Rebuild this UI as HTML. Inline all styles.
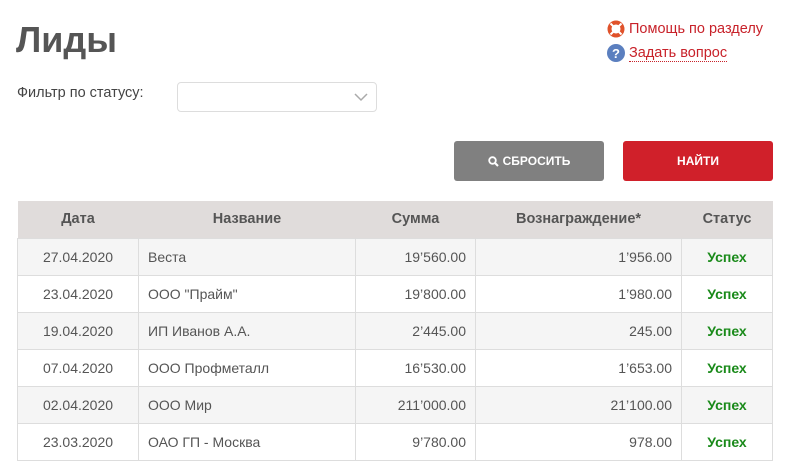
<!DOCTYPE html>
<html><head><meta charset="utf-8"><style>
*{margin:0;padding:0;box-sizing:border-box}
body{width:785px;height:460px;overflow:hidden;background:#fff;font-family:"Liberation Sans",sans-serif;color:#555;position:relative}
h1{position:absolute;left:16px;top:19px;font-size:36px;font-weight:bold;color:#555}
.help{position:absolute;left:607px;top:17px;font-size:14.5px;color:#c8222a}
.help div{height:24px;display:flex;align-items:center}
.help svg{margin-right:4px}
.help .u{border-bottom:1px dotted #c8222a;line-height:16px}
.lbl{position:absolute;left:17px;top:85px;font-size:14.5px;color:#444}
.sel{position:absolute;left:177px;top:82px;width:200px;height:30px;border:1px solid #ddd;border-radius:4px}
.btn{position:absolute;top:141px;height:40px;border-radius:3px;color:#fff;font-size:12px;font-weight:bold;display:flex;align-items:center;justify-content:center}
table{position:absolute;left:17px;top:201px;width:756px;border-collapse:collapse;font-size:14px}
th{height:37px;background:#e0dcdb;color:#555;font-weight:bold;font-size:14.5px}
td{height:37px;border:1px solid #ddd;padding:0 9px;color:#555}
tr:nth-child(even) td{background:#f5f5f5}
td.c{text-align:center}td.r{text-align:right}
td.s{text-align:center;color:#1a8a1a;font-weight:bold}
</style></head><body>
<h1>Лиды</h1>
<div class="help">
<div><svg width="18" height="18" viewBox="0 0 18 18"><circle cx="9" cy="9" r="6.5" fill="none" stroke="#e0522a" stroke-width="4"/><path d="M3.5 3.5l3 3M14.5 3.5l-3 3M3.5 14.5l3-3M14.5 14.5l-3-3" stroke="#fff" stroke-width="2"/></svg>Помощь по разделу</div>
<div><svg width="18" height="18" viewBox="0 0 18 18"><circle cx="9" cy="9" r="9" fill="#5b7fbf"/><text x="9" y="14" font-size="13" font-weight="bold" fill="#fff" text-anchor="middle" font-family="Liberation Sans">?</text></svg><span class="u">Задать вопрос</span></div>
</div>
<div class="lbl">Фильтр по статусу:</div>
<div class="sel"><svg style="position:absolute;right:8px;top:9px" width="14" height="10"><path d="M1 2l6 6 6-6" fill="none" stroke="#aaa" stroke-width="1.5"/></svg></div>
<div class="btn" style="left:454px;width:150px;background:#808080"><svg width="11" height="11" viewBox="0 0 11 11" style="margin-right:4px"><circle cx="4.5" cy="4.5" r="3.3" fill="none" stroke="#fff" stroke-width="1.8"/><path d="M7 7l3 3" stroke="#fff" stroke-width="2"/></svg>СБРОСИТЬ</div>
<div class="btn" style="left:623px;width:150px;background:#d0202a">НАЙТИ</div>
<table>
<tr><th style="width:121px">Дата</th><th style="width:217px">Название</th><th style="width:120px">Сумма</th><th style="width:206px">Вознаграждение*</th><th>Статус</th></tr>
<tr><td class="c">27.04.2020</td><td>Веста</td><td class="r">19’560.00</td><td class="r">1’956.00</td><td class="s">Успех</td></tr>
<tr><td class="c">23.04.2020</td><td>ООО "Прайм"</td><td class="r">19’800.00</td><td class="r">1’980.00</td><td class="s">Успех</td></tr>
<tr><td class="c">19.04.2020</td><td>ИП Иванов А.А.</td><td class="r">2’445.00</td><td class="r">245.00</td><td class="s">Успех</td></tr>
<tr><td class="c">07.04.2020</td><td>ООО Профметалл</td><td class="r">16’530.00</td><td class="r">1’653.00</td><td class="s">Успех</td></tr>
<tr><td class="c">02.04.2020</td><td>ООО Мир</td><td class="r">211’000.00</td><td class="r">21’100.00</td><td class="s">Успех</td></tr>
<tr><td class="c">23.03.2020</td><td>ОАО ГП - Москва</td><td class="r">9’780.00</td><td class="r">978.00</td><td class="s">Успех</td></tr>
</table>
</body></html>
